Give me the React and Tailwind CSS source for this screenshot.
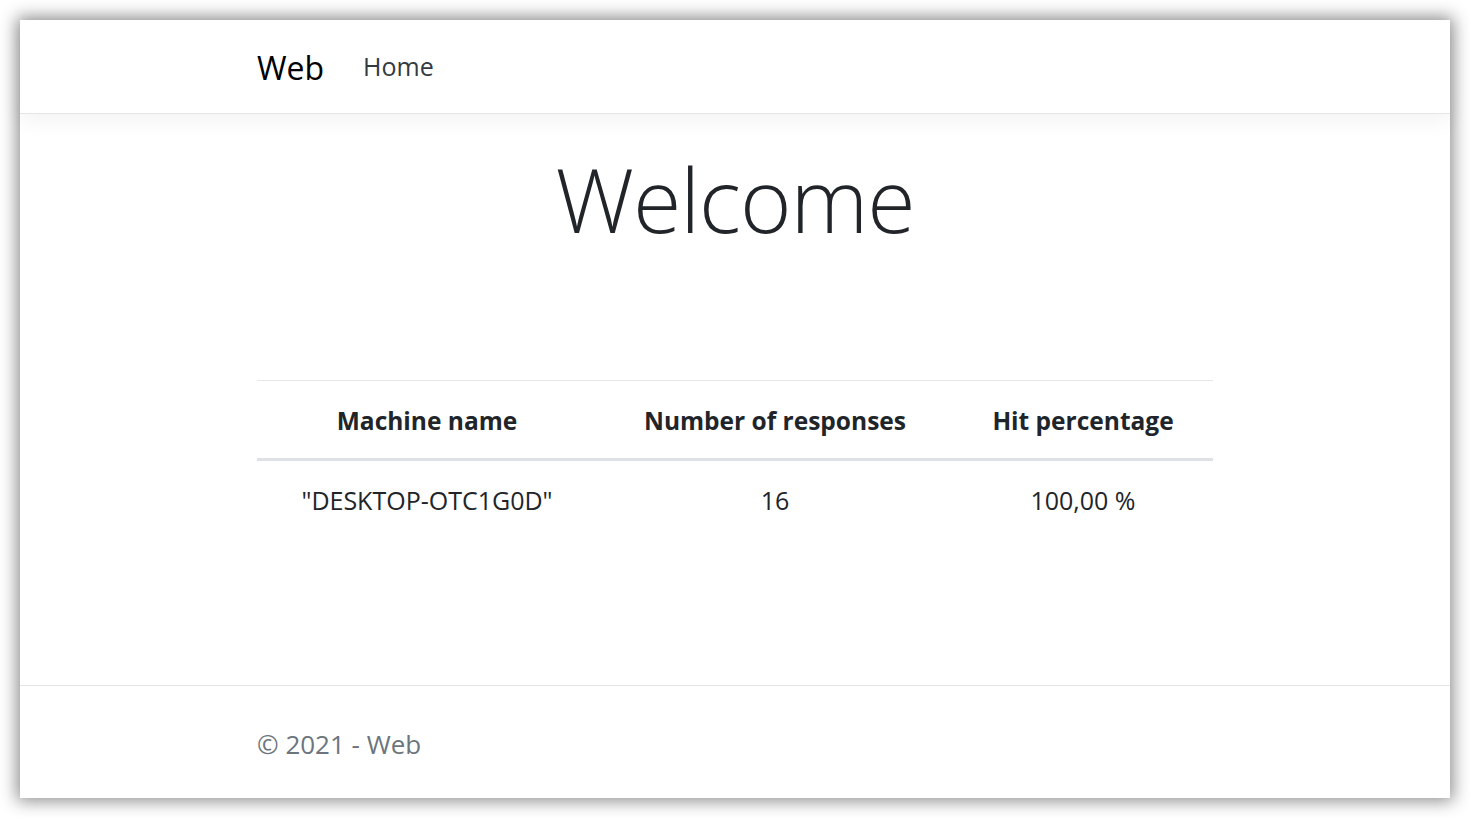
export default function App() {
  return (
    <div className="w-[1470px] h-[818px] bg-white p-[20px] font-['Open_Sans',sans-serif] text-[#212529]">
      <div className="w-[1430px] h-[778px] bg-white shadow-[0_0_16px_3px_rgba(0,0,0,0.45)] flex flex-col">
        <nav className="h-[94px] shrink-0 border-b border-[#e5e5e5] shadow-[0_7px_20px_rgba(0,0,0,0.05)] relative z-10 bg-white flex items-center">
          <div className="w-[956px] mx-auto flex items-center">
            <span className="text-[32px] text-black leading-none mt-[2px]">Web</span>
            <span className="ml-[39px] text-[25px] text-[#343a40] leading-none">Home</span>
          </div>
        </nav>
        <main className="flex-1">
          <div className="w-[956px] mx-auto">
            <h1 className="text-center text-[88px] font-light leading-none mt-[41px] tracking-[-1px]">Welcome</h1>
            <table className="w-full border-collapse mt-[137px]">
              <thead>
                <tr>
                  <th className="w-[340px] h-[79px] pt-[4px] border-t border-[#e4e7ea] border-b-[3px] border-b-[#dee2e6] text-[24.5px] font-bold">Machine name</th>
                  <th className="w-[356px] h-[79px] pt-[4px] border-t border-[#e4e7ea] border-b-[3px] border-b-[#dee2e6] text-[24.5px] font-bold">Number of responses</th>
                  <th className="h-[79px] pt-[4px] border-t border-[#e4e7ea] border-b-[3px] border-b-[#dee2e6] text-[24.5px] font-bold">Hit percentage</th>
                </tr>
              </thead>
              <tbody>
                <tr>
                  <td className="h-[80px] text-center text-[25px]">"DESKTOP-OTC1G0D"</td>
                  <td className="h-[80px] text-center text-[25px]">16</td>
                  <td className="h-[80px] text-center text-[25px]">100,00 %</td>
                </tr>
              </tbody>
            </table>
          </div>
        </main>
        <footer className="h-[113px] shrink-0 border-t border-[#e5e5e5] flex items-center">
          <div className="w-[956px] mx-auto text-[26px] text-[#6c757d] leading-none mt-[4px]">© 2021 - Web</div>
        </footer>
      </div>
    </div>
  );
}
